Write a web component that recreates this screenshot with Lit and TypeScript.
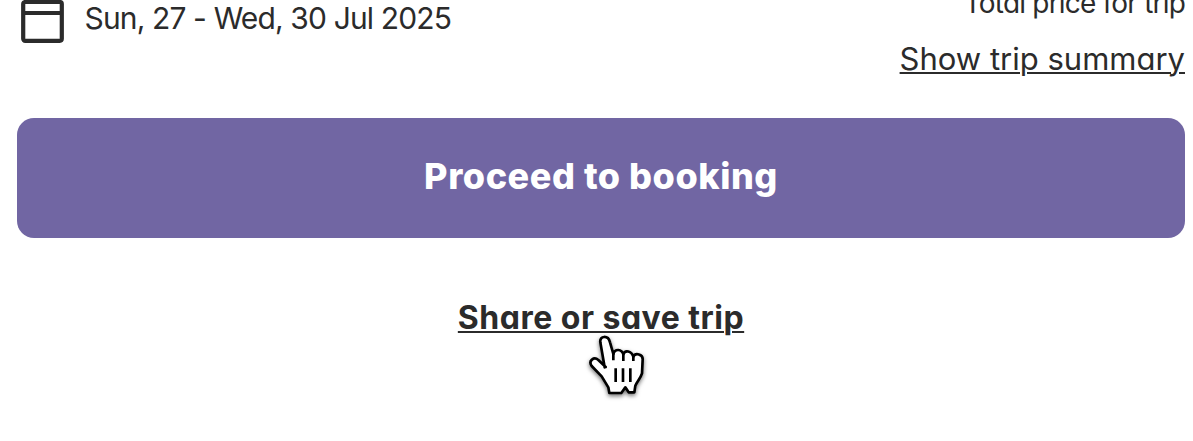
import { LitElement, html, css, svg } from "lit";
import { customElement } from "lit/decorators.js";

const calendarIcon = svg`
  <rect x="2.2" y="2" width="38.6" height="38.8" rx="2" fill="none" stroke="currentColor" stroke-width="4.2"/>
  <path d="M2 13H41" stroke="currentColor" stroke-width="4.2"/>`;

@customElement("app-root")
export class AppRoot extends LitElement {
  static styles = css`
    :host {
      display: block;
      height: 441px;
      overflow: hidden;
      background: #fff;
      color: #2b2b2b;
      font: 400 30px/40px Inter, Lato, sans-serif;
      font-feature-settings: "cv11" 1;
      white-space: nowrap;
    }
    .page { display: flex; flex-direction: column; padding: 0 8px 0 17px; }
    .top { display: flex; justify-content: space-between; align-items: flex-start; height: 118px; }
    .dates { display: flex; align-items: flex-start; gap: 20.5px; padding-left: 4px; }
    .calendar { display: block; width: 43px; height: 43px; }
    .date { margin-top: -2px; font-size: 30px; letter-spacing: -0.86px; }
    .price { display: flex; flex-direction: column; align-items: flex-end; gap: 16px; margin-top: -17px; }
    .total { font-size: 28px; letter-spacing: -0.8px; }
    .link {
      color: inherit;
      text-decoration: underline;
      text-decoration-thickness: 2px;
      text-underline-offset: 2px;
    }
    .summary { font-size: 31px; }
    .button {
      height: 119.5px;
      border: 0;
      border-radius: 17px;
      padding: 0 0 3px;
      background: #7166a3;
      color: #fff;
      font: 800 36px/40px Inter, Lato, sans-serif;
      font-feature-settings: "cv11" 1;
      letter-spacing: 0.55px;
    }
    .share { align-self: center; margin-top: 60.5px; font-weight: 700; font-size: 32px; letter-spacing: 0.5px; }
    .trigger { position: relative; }
    .cursor {
      position: absolute;
      left: calc(50% - 31px);
      top: 27.5px;
      width: 100px;
      height: 85px;
      overflow: visible;
      filter: drop-shadow(0 2px 2px rgb(0 0 0 / 0.55));
    }
  `;

  render() {
    return html`
      <main class="page">
        <div class="top">
          <div class="dates">
            <svg class="calendar" viewBox="0 0 43 43">${calendarIcon}</svg>
            <span class="date">Sun, 27 - Wed, 30 Jul 2025</span>
          </div>
          <div class="price">
            <span class="total">Total price for trip</span>
            <a class="link summary">Show trip summary</a>
          </div>
        </div>
        <button class="button"><span class="label">Proceed to booking</span></button>
        <div class="share trigger">
          <a class="link save">Share or save trip</a>
          <svg class="cursor" viewBox="0 0 300 255">
            <path
              d="M104 124 L91 49 C88 28 115 27 120 49 L130 84 C135 67 155 69 160 85 C165 71 184 74 190 92 C196 79 219 85 218 100 L216 142 C212 156 202 165 196 179 L193 199 L176 199 L166 184 L154 201 L118 201 L115 184 L95 151 L65 120 C54 104 72 91 85 102 L107 123 Z"
              fill="#fff" stroke="#000" stroke-width="8" stroke-linejoin="round"/>
            <path d="M130 81V103M160 83V105M190 90V105M137 127V168M159 127V168M181 127V168" fill="none" stroke="#000" stroke-width="8"/>
          </svg>
        </div>
      </main>`;
  }
}
